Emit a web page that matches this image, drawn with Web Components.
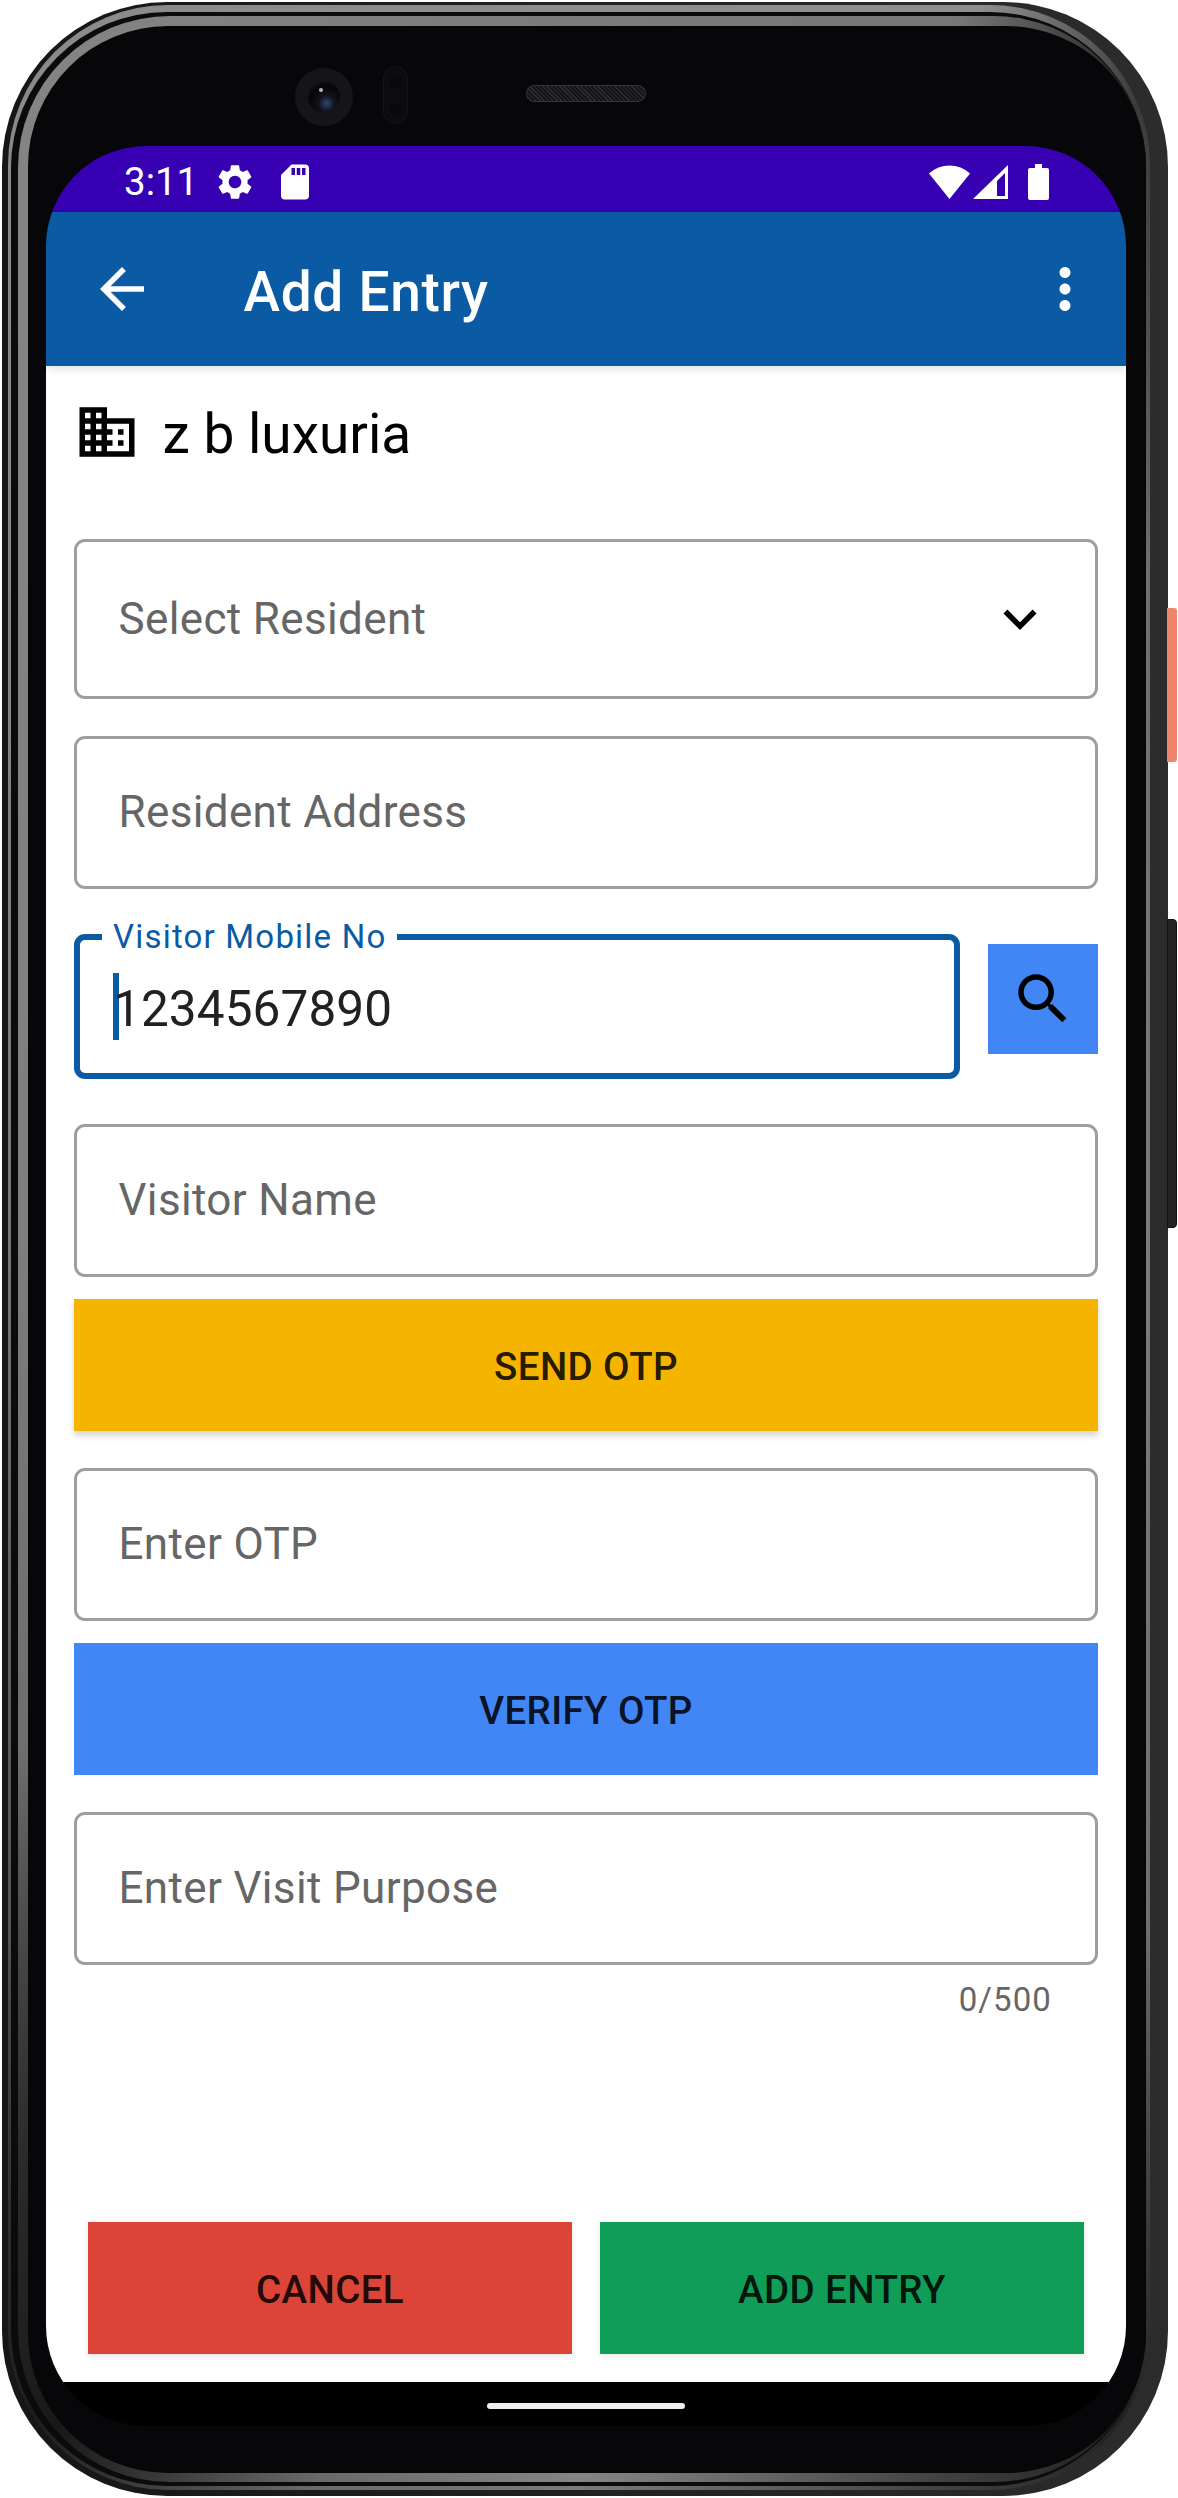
<!DOCTYPE html>
<html>
<head>
<meta charset="utf-8">
<title>Add Entry</title>
<style>
  html, body { margin: 0; background: #fff; }
  body { font-family: Roboto, "Liberation Sans", sans-serif; }
</style>
</head>
<body>
<phone-frame>
  <status-bar></status-bar>
  <app-bar title="Add Entry"></app-bar>
  <add-entry-form></add-entry-form>
</phone-frame>

<script>
const ICONS = {
  back: 'M20,11H7.83l5.59-5.59L12,4l-8,8 8,8 1.41-1.41L7.83,13H20v-2z',
  domain: 'M12 7V3H2v18h20V7H12zM6 19H4v-2h2v2zm0-4H4v-2h2v2zm0-4H4V9h2v2zm0-4H4V5h2v2zm4 12H8v-2h2v2zm0-4H8v-2h2v2zm0-4H8V9h2v2zm0-4H8V5h2v2zm10 12h-8v-2h2v-2h-2v-2h2v-2h-2V9h8v10zm-2-8h-2v2h2v-2zm0 4h-2v2h2v-2z',
  expand: 'M16.59 8.59L12 13.17 7.41 8.59 6 10l6 6 6-6z',
  search: 'M15.5 14h-.79l-.28-.27C15.41 12.59 16 11.11 16 9.5 16 5.91 13.09 3 9.5 3S3 5.91 3 9.5 5.91 16 9.5 16c1.61 0 3.09-.59 4.23-1.57l.27.28v.79l5 4.99L20.49 19l-4.99-5zm-6 0C7.01 14 5 11.99 5 9.5S7.01 5 9.5 5 14 7.01 14 9.5 11.99 14 9.5 14z',
  gear: 'M19.14,12.94c0.04-0.3,0.06-0.61,0.06-0.94c0-0.32-0.02-0.64-0.07-0.94l2.03-1.58c0.18-0.14,0.23-0.41,0.12-0.61l-1.92-3.32c-0.12-0.22-0.37-0.29-0.59-0.22l-2.39,0.96c-0.5-0.38-1.03-0.7-1.62-0.94L14.4,2.81c-0.04-0.24-0.24-0.41-0.48-0.41h-3.84c-0.24,0-0.43,0.17-0.47,0.41L9.25,5.35C8.66,5.59,8.12,5.92,7.63,6.29L5.24,5.33c-0.22-0.08-0.47,0-0.59,0.22L2.74,8.87C2.62,9.08,2.66,9.34,2.86,9.48l2.03,1.58C4.84,11.36,4.8,11.69,4.8,12s0.02,0.64,0.07,0.94l-2.03,1.58c-0.18,0.14-0.23,0.41-0.12,0.61l1.92,3.32c0.12,0.22,0.37,0.29,0.59,0.22l2.39-0.96c0.5,0.38,1.03,0.7,1.62,0.94l0.36,2.54c0.05,0.24,0.24,0.41,0.48,0.41h3.84c0.24,0,0.44-0.17,0.47-0.41l0.36-2.54c0.59-0.24,1.13-0.56,1.62-0.94l2.39,0.96c0.22,0.08,0.47,0,0.59-0.22l1.92-3.32c0.12-0.22,0.07-0.47-0.12-0.61L19.14,12.94z M12,15.6c-1.98,0-3.6-1.62-3.6-3.6s1.62-3.6,3.6-3.6s3.6,1.62,3.6,3.6S13.98,15.6,12,15.6z',
  sd: 'M18 2h-8L4.02 8 4 20c0 1.1.9 2 2 2h12c1.1 0 2-.9 2-2V4c0-1.1-.9-2-2-2zm-6 6h-2V4h2v4zm3 0h-2V4h2v4zm3 0h-2V4h2v4z',
  more: 'M12 8c1.1 0 2-.9 2-2s-.9-2-2-2-2 .9-2 2 .9 2 2 2zm0 2c-1.1 0-2 .9-2 2s.9 2 2 2 2-.9 2-2-.9-2-2-2zm0 6c-1.1 0-2 .9-2 2s.9 2 2 2 2-.9 2-2-.9-2-2-2z'
};

const icon = (name, size, fill) =>
  `<svg width="${size}" height="${size}" viewBox="0 0 24 24" fill="${fill}" style="display:block;flex:none"><path d="${ICONS[name]}"/></svg>`;

class PhoneFrame extends HTMLElement {
  constructor() {
    super();
    this.shadowDOM = this.attachShadow({mode: 'open'});
  }

  connectedCallback() {
    this.shadowDOM.innerHTML = `
      <style>
      :host {
        display: block;
        position: relative;
        width: 1166px;
        height: 2494px;
        margin: 2px 0 0 2px;
      }
      .shell, .ring1, .ring2, .ring3, .bezel {
        box-sizing: border-box;
        height: 100%;
      }
      .shell {
        padding: 3px 18px 6px 6px;
        border-radius: 165px;
        background: linear-gradient(90deg, #161616, #2c2c2c);
      }
      /* highlights are bright on top and left, they die out in the corners */
      .ring1 {
        padding: 7px 4px 4px 3px;
        border-radius: 160px;
        background: conic-gradient(#8e8e8e 0deg, #8e8e8e 18deg, #3a3a3a 26deg, #6f6f6f 40deg, #7c7c7c 90deg, #6f6f6f 140deg, #202020 155deg, #5a5a5a 170deg, #7a7a7a 180deg, #6a6a6a 192deg, #1c1c1c 205deg, #555 220deg, #777 270deg, #8a8a8a 335deg, #8e8e8e 360deg);
      }
      .ring2 {
        padding: 4px 0 4px 7px;
        border-radius: 156px;
        background: #0b0b0b;
      }
      .ring3 {
        padding: 10px 0 9px 10px;
        border-radius: 152px;
        background: conic-gradient(#7b7b7b 0deg, #777 17deg, #2c2c2c 24deg, #111 32deg, #111 150deg, #202020 156deg, #666 172deg, #858585 180deg, #6a6a6a 192deg, #181818 204deg, #2c2c2c 212deg, #6e6e6e 228deg, #7d7d7d 270deg, #848484 335deg, #7b7b7b 360deg);
      }
      .bezel {
        display: flex;
        flex-direction: column;
        padding: 0 20px 47px 18px;
        border-radius: 140px;
        background: #070709;
      }
      .top {
        flex: none;
        height: 120px;
        display: flex;
        align-items: flex-start;
      }
      .lens {
        position: relative;
        flex: none;
        width: 58px;
        height: 58px;
        margin: 42px 0 0 249px;
        border-radius: 50%;
        display: flex;
        align-items: center;
        justify-content: center;
        background: radial-gradient(circle, #151518 70%, #111113 85%, #0a0a0c);
      }
      .lens i {
        width: 32px;
        height: 32px;
        border-radius: 50%;
        background: radial-gradient(circle at 58% 70%, #2f4670, #12131b 28%, #050507 60%, #26262a 100%);
      }
      .lens b {
        position: absolute;
        left: 24px;
        top: 20px;
        width: 4px;
        height: 4px;
        border-radius: 50%;
        background: #b5b5b5;
      }
      .sensor {
        flex: none;
        box-sizing: border-box;
        width: 25px;
        height: 58px;
        margin: 40px 0 0 30px;
        border-radius: 13px;
        background: #0c0c0f;
        border: 1px solid #151518;
        display: flex;
        flex-direction: column;
        align-items: center;
        justify-content: space-around;
      }
      .sensor i {
        width: 15px;
        height: 15px;
        border-radius: 50%;
        background: #09090b;
        border: 1px solid #111114;
        box-sizing: border-box;
      }
      .speaker {
        flex: none;
        box-sizing: border-box;
        width: 120px;
        height: 17px;
        margin: 59px 0 0 118px;
        border-radius: 8px;
        border: 1px solid #333;
        background: repeating-linear-gradient(45deg, #2e2e30 0 1px, #151517 1px 3px);
      }
      .screen {
        flex: none;
        width: 1080px;
        height: 2280px;
        display: flex;
        flex-direction: column;
        overflow: hidden;
        border-radius: 100px;
        background: #000;
      }
      .nav {
        flex: none;
        height: 44px;
        display: flex;
        justify-content: center;
        align-items: flex-start;
      }
      .nav i {
        width: 198px;
        height: 6px;
        margin-top: 21px;
        border-radius: 3px;
        background: #efefef;
      }
      .btn {
        position: absolute;
        left: 1165px;
        width: 10px;
      }
      .power {
        top: 606px;
        height: 154px;
        border-radius: 0 3px 3px 0;
        background: #ee8468;
      }
      .volume {
        top: 917px;
        height: 309px;
        border-radius: 0 4px 4px 0;
        background: #242424;
        border: 1px solid #111;
        box-sizing: border-box;
      }
      </style>
      <div class="shell"><div class="ring1"><div class="ring2"><div class="ring3">
        <div class="bezel">
          <div class="top">
            <div class="lens"><i></i><b></b></div>
            <div class="sensor"><i></i><i></i></div>
            <div class="speaker"></div>
          </div>
          <div class="screen">
            <slot></slot>
            <div class="nav"><i></i></div>
          </div>
        </div>
      </div></div></div></div>
      <div class="btn power"></div>
      <div class="btn volume"></div>
    `;
  }
}

class StatusBar extends HTMLElement {
  constructor() {
    super();
    this.shadowDOM = this.attachShadow({mode: 'open'});
  }

  connectedCallback() {
    this.shadowDOM.innerHTML = `
      <style>
      :host {
        display: flex;
        flex: none;
        box-sizing: border-box;
        height: 66px;
        padding: 5px 77px 0 78px;
        align-items: center;
        background: #3700b3;
        color: #fff;
        font: 400 38.5px Roboto, sans-serif;
      }
      .time { width: 90px; flex: none; }
      .sd { margin-left: 18px; }
      .right { margin-left: auto; display: flex; align-items: center; }
      svg { display: block; flex: none; }
      </style>
      <span class="time">3:11</span>
      ${icon('gear', 42, '#fff')}
      <span class="sd">${icon('sd', 42, '#fff')}</span>
      <div class="right">
        <svg width="41" height="34" viewBox="0 0 41 34" fill="#fff"><path d="M0 8.5A30 30 0 0 1 41 8.5L20.5 34Z"/></svg>
        <svg width="35" height="34" viewBox="0 0 35 34" fill="#fff" fill-rule="evenodd" style="margin-left:3px"><path d="M0 34L35 0V34ZM24 16V31H32V8Z"/></svg>
        <svg width="21" height="36" viewBox="0 0 21 36" fill="#fff" style="margin-left:20px"><path d="M7 0H14V4H19A2 2 0 0 1 21 6V34A2 2 0 0 1 19 36H2A2 2 0 0 1 0 34V6A2 2 0 0 1 2 4H7Z"/></svg>
      </div>
    `;
  }
}

class AppBar extends HTMLElement {
  constructor() {
    super();
    this.shadowDOM = this.attachShadow({mode: 'open'});
  }

  connectedCallback() {
    this.shadowDOM.innerHTML = `
      <style>
      :host {
        display: flex;
        flex: none;
        position: relative;
        z-index: 1;
        box-sizing: border-box;
        height: 154px;
        padding: 0 28px 0 42.5px;
        align-items: center;
        background: #0b5aa4;
        color: #fff;
        box-shadow: 0 3px 9px rgba(0, 0, 0, .12);
        font: 500 55px Roboto, sans-serif;
        letter-spacing: .69px;
      }
      .title { margin-left: 89px; padding-top: 5px; }
      .more { margin-left: auto; }
      </style>
      ${icon('back', 66, '#fff')}
      <span class="title">${this.getAttribute('title')}</span>
      <span class="more">${icon('more', 66, '#fff')}</span>
    `;
  }
}

class OutlinedField extends HTMLElement {
  constructor() {
    super();
    this.shadowDOM = this.attachShadow({mode: 'open'});
  }

  connectedCallback() {
    this.shadowDOM.innerHTML = `
      <style>
      :host {
        display: flex;
        box-sizing: border-box;
        height: 153px;
        padding: 0 43px 1px 41.5px;
        align-items: center;
        justify-content: space-between;
        border: 3px solid #9e9e9e;
        border-radius: 11px;
        background: #fff;
        color: #666;
        font: 400 44px Roboto, sans-serif;
        letter-spacing: .35px;
      }
      </style>
      <slot></slot>
      <slot name="end"></slot>
    `;
  }
}

class FocusedField extends HTMLElement {
  constructor() {
    super();
    this.shadowDOM = this.attachShadow({mode: 'open'});
  }

  connectedCallback() {
    this.shadowDOM.innerHTML = `
      <style>
      :host {
        display: flex;
        position: relative;
        box-sizing: border-box;
        height: 145px;
        padding: 0 33px;
        align-items: center;
        border: 6px solid #0b5aa4;
        border-radius: 11px;
        background: #fff;
        color: #212121;
        font: 400 49.5px Roboto, sans-serif;
        letter-spacing: .1px;
      }
      label {
        position: absolute;
        left: 22px;
        top: -18px;
        padding: 0 11px;
        background: #fff;
        color: #0b5aa4;
        font-size: 33px;
        line-height: 30px;
        letter-spacing: 1.2px;
      }
      .caret {
        flex: none;
        width: 6px;
        height: 67px;
        margin-right: -6px;
        background: #0b5aa4;
      }
      .value { padding-top: 5px; }
      </style>
      <label>${this.getAttribute('label')}</label>
      <span class="caret"></span>
      <span class="value"><slot></slot></span>
    `;
  }
}

class ActionButton extends HTMLElement {
  constructor() {
    super();
    this.shadowDOM = this.attachShadow({mode: 'open'});
  }

  connectedCallback() {
    this.shadowDOM.innerHTML = `
      <style>
      :host {
        display: flex;
        box-sizing: border-box;
        height: 132px;
        padding-top: 3px;
        align-items: center;
        justify-content: center;
        background: var(--bg, #4285f4);
        box-shadow: var(--shadow, none);
        color: rgba(0, 0, 0, .87);
        font: 500 38.5px Roboto, sans-serif;
        letter-spacing: .4px;
      }
      </style>
      <slot></slot>
    `;
  }
}

class AddEntryForm extends HTMLElement {
  constructor() {
    super();
    this.shadowDOM = this.attachShadow({mode: 'open'});
  }

  connectedCallback() {
    this.shadowDOM.innerHTML = `
      <style>
      :host {
        display: flex;
        flex-direction: column;
        flex: none;
        box-sizing: border-box;
        height: 2016px;
        padding: 0 28px 28px;
        background: #fff;
        font-family: Roboto, sans-serif;
      }
      .site {
        display: flex;
        align-items: flex-start;
        padding-top: 33px;
        margin-bottom: 72px;
        color: #000;
        font-size: 55px;
        line-height: 66px;
      }
      .site span { margin: 2px 0 0 22.5px; }
      .end { display: block; margin-right: -1px; }
      .gap-l { margin-top: 37px; }
      .gap-xl { margin-top: 45px; }
      .gap-s { margin-top: 22px; }
      .mobile {
        display: grid;
        grid-template-columns: 886px 110px;
        column-gap: 28px;
        align-items: start;
      }
      .find {
        display: flex;
        height: 110px;
        margin-top: 10px;
        align-items: center;
        justify-content: center;
        background: #4285f4;
      }
      .counter {
        align-self: flex-end;
        margin: 15px 46px 0 0;
        color: #666;
        font-size: 33px;
        line-height: 40px;
        letter-spacing: 1.1px;
      }
      .actions {
        display: grid;
        grid-template-columns: 1fr 1fr;
        column-gap: 28px;
        margin: auto 14px 0;
      }
      .send { --bg: #f4b400; --shadow: 0 5px 6px rgba(0, 0, 0, .16); }
      .verify { --bg: #4285f4; }
      .cancel { --bg: #db4437; --shadow: 0 2px 7px rgba(0, 0, 0, .1); }
      .add { --bg: #0f9d58; --shadow: 0 2px 7px rgba(0, 0, 0, .1); }
      </style>
      <div class="site">${icon('domain', 66, '#000')}<span>z b luxuria</span></div>
      <outlined-field style="height:160px">Select Resident<span slot="end" class="end">${icon('expand', 66, '#000')}</span></outlined-field>
      <outlined-field class="gap-l">Resident Address</outlined-field>
      <div class="mobile gap-xl">
        <focused-field label="Visitor Mobile No">1234567890</focused-field>
        <div class="find">${icon('search', 66, '#000')}</div>
      </div>
      <outlined-field class="gap-xl">Visitor Name</outlined-field>
      <action-button class="send gap-s">SEND OTP</action-button>
      <outlined-field class="gap-l">Enter OTP</outlined-field>
      <action-button class="verify gap-s">VERIFY OTP</action-button>
      <outlined-field class="gap-l">Enter Visit Purpose</outlined-field>
      <div class="counter">0/500</div>
      <div class="actions">
        <action-button class="cancel">CANCEL</action-button>
        <action-button class="add">ADD ENTRY</action-button>
      </div>
    `;
  }
}

customElements.define('phone-frame', PhoneFrame);
customElements.define('status-bar', StatusBar);
customElements.define('app-bar', AppBar);
customElements.define('outlined-field', OutlinedField);
customElements.define('focused-field', FocusedField);
customElements.define('action-button', ActionButton);
customElements.define('add-entry-form', AddEntryForm);
</script>
</body>
</html>
